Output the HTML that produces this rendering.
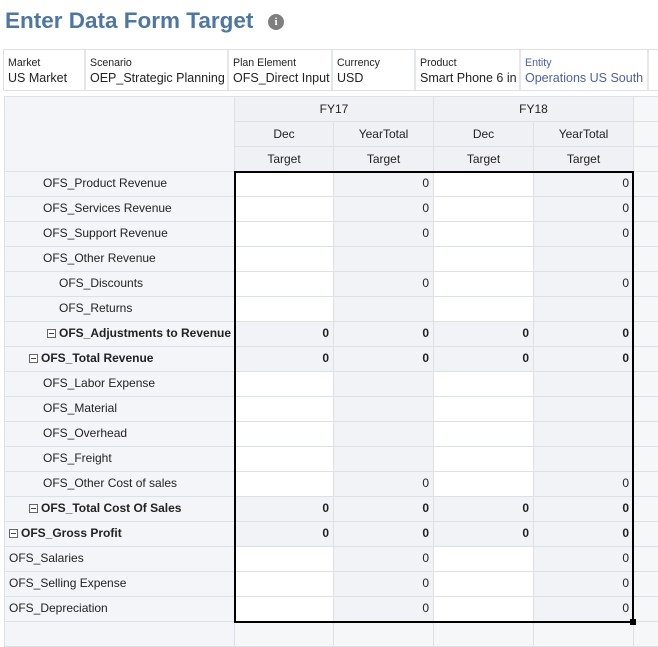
<!DOCTYPE html>
<html><head><meta charset="utf-8">
<style>
*{margin:0;padding:0;box-sizing:border-box}
body{width:658px;height:629px;overflow:hidden;background:#fff;font-family:"Liberation Sans",Arial,sans-serif;color:#222;position:relative}
h1{position:absolute;left:5px;top:8px;font-size:22.5px;font-weight:bold;color:#4c77a3}
.info{position:absolute;left:268px;top:14px;width:16px;height:16px;border-radius:50%;background:#7f7f7f;color:#fff;font:bold 11px "Liberation Serif",serif;text-align:center;line-height:16px}
.dims{position:absolute;left:3px;top:49px;width:656px;height:42px;border:1px solid #dde1e6;border-right:none}
.dim{position:absolute;top:0;height:40px;padding:7px 0 0 4px;border-right:2px solid #e3e6ea}
.dim .l{font-size:10.6px;color:#222;line-height:13px}
.dim .v{font-size:12.5px;line-height:16px;color:#222;white-space:nowrap}
.blue .l,.blue .v{color:#4a5fa8}
table{position:absolute;left:4px;top:96px;border-collapse:collapse;table-layout:fixed;width:659px}
tr{height:25px}
td{height:25px;border:1px solid #dde1e6;font-size:12px;padding:0 4px;white-space:nowrap;overflow:hidden;line-height:14px}
tr.d td{padding-bottom:3px}
.h{background:#f0f1f4;text-align:center}
.lab{background:#f3f5f8}
.w{background:#fff}
.g{background:#f1f3f6;text-align:right}
.b{font-weight:bold}
.x{background:#f6f7f9;border-right:none}
.box{display:inline-block;width:9px;height:9px;border:1px solid #666;position:relative;vertical-align:-1px;margin-right:3px;background:#fff}
.box:after{content:"";position:absolute;left:1px;top:3px;width:5px;height:1px;background:#444}
.sel{position:absolute;left:234px;top:171px;width:400px;height:452px;border:2px solid #000}
.hand{position:absolute;left:630px;top:619px;width:6px;height:6px;background:#000}
</style></head><body>
<h1>Enter Data Form Target</h1>
<div class="info">i</div>
<div class="dims">
<div class="dim" style="left:0;width:82px"><div class="l">Market</div><div class="v">US Market</div></div>
<div class="dim" style="left:82px;width:143px"><div class="l">Scenario</div><div class="v">OEP_Strategic Planning</div></div>
<div class="dim" style="left:225px;width:104px"><div class="l">Plan Element</div><div class="v">OFS_Direct Input</div></div>
<div class="dim" style="left:329px;width:83px"><div class="l">Currency</div><div class="v">USD</div></div>
<div class="dim" style="left:412px;width:105px"><div class="l">Product</div><div class="v">Smart Phone 6 in</div></div>
<div class="dim blue" style="left:517px;width:128px"><div class="l">Entity</div><div class="v">Operations US South</div></div>
</div>
<table>
<colgroup><col style="width:230px"><col style="width:99px"><col style="width:100px"><col style="width:100px"><col style="width:100px"><col style="width:30px"></colgroup>
<tr><td rowspan="3" class="lab"></td><td colspan="2" class="h">FY17</td><td colspan="2" class="h">FY18</td><td class="h x"></td></tr>
<tr><td class="h">Dec</td><td class="h">YearTotal</td><td class="h">Dec</td><td class="h">YearTotal</td><td class="h x"></td></tr>
<tr><td class="h">Target</td><td class="h">Target</td><td class="h">Target</td><td class="h">Target</td><td class="h x"></td></tr>
<tr class="d"><td class="lab" style="padding-left:38px">OFS_Product Revenue</td><td class="w"></td><td class="g">0</td><td class="w"></td><td class="g">0</td><td class="x"></td></tr>
<tr class="d"><td class="lab" style="padding-left:38px">OFS_Services Revenue</td><td class="w"></td><td class="g">0</td><td class="w"></td><td class="g">0</td><td class="x"></td></tr>
<tr class="d"><td class="lab" style="padding-left:38px">OFS_Support Revenue</td><td class="w"></td><td class="g">0</td><td class="w"></td><td class="g">0</td><td class="x"></td></tr>
<tr class="d"><td class="lab" style="padding-left:38px">OFS_Other Revenue</td><td class="w"></td><td class="g"></td><td class="w"></td><td class="g"></td><td class="x"></td></tr>
<tr class="d"><td class="lab" style="padding-left:54px">OFS_Discounts</td><td class="w"></td><td class="g">0</td><td class="w"></td><td class="g">0</td><td class="x"></td></tr>
<tr class="d"><td class="lab" style="padding-left:54px">OFS_Returns</td><td class="w"></td><td class="g"></td><td class="w"></td><td class="g"></td><td class="x"></td></tr>
<tr class="d"><td class="lab b" style="padding-left:42px"><span class="box"></span>OFS_Adjustments to Revenue</td><td class="g b">0</td><td class="g b">0</td><td class="g b">0</td><td class="g b">0</td><td class="x"></td></tr>
<tr class="d"><td class="lab b" style="padding-left:24px"><span class="box"></span>OFS_Total Revenue</td><td class="g b">0</td><td class="g b">0</td><td class="g b">0</td><td class="g b">0</td><td class="x"></td></tr>
<tr class="d"><td class="lab" style="padding-left:38px">OFS_Labor Expense</td><td class="w"></td><td class="g"></td><td class="w"></td><td class="g"></td><td class="x"></td></tr>
<tr class="d"><td class="lab" style="padding-left:38px">OFS_Material</td><td class="w"></td><td class="g"></td><td class="w"></td><td class="g"></td><td class="x"></td></tr>
<tr class="d"><td class="lab" style="padding-left:38px">OFS_Overhead</td><td class="w"></td><td class="g"></td><td class="w"></td><td class="g"></td><td class="x"></td></tr>
<tr class="d"><td class="lab" style="padding-left:38px">OFS_Freight</td><td class="w"></td><td class="g"></td><td class="w"></td><td class="g"></td><td class="x"></td></tr>
<tr class="d"><td class="lab" style="padding-left:38px">OFS_Other Cost of sales</td><td class="w"></td><td class="g">0</td><td class="w"></td><td class="g">0</td><td class="x"></td></tr>
<tr class="d"><td class="lab b" style="padding-left:24px"><span class="box"></span>OFS_Total Cost Of Sales</td><td class="g b">0</td><td class="g b">0</td><td class="g b">0</td><td class="g b">0</td><td class="x"></td></tr>
<tr class="d"><td class="lab b" style="padding-left:4px"><span class="box"></span>OFS_Gross Profit</td><td class="g b">0</td><td class="g b">0</td><td class="g b">0</td><td class="g b">0</td><td class="x"></td></tr>
<tr class="d"><td class="lab" style="padding-left:4px">OFS_Salaries</td><td class="w"></td><td class="g">0</td><td class="w"></td><td class="g">0</td><td class="x"></td></tr>
<tr class="d"><td class="lab" style="padding-left:4px">OFS_Selling Expense</td><td class="w"></td><td class="g">0</td><td class="w"></td><td class="g">0</td><td class="x"></td></tr>
<tr class="d"><td class="lab" style="padding-left:4px">OFS_Depreciation</td><td class="w"></td><td class="g">0</td><td class="w"></td><td class="g">0</td><td class="x"></td></tr>
<tr><td class="lab"></td><td class="x"></td><td class="x"></td><td class="x"></td><td class="x"></td><td class="x"></td></tr>
</table>
<div class="sel"></div>
<div class="hand"></div>
</body></html>
